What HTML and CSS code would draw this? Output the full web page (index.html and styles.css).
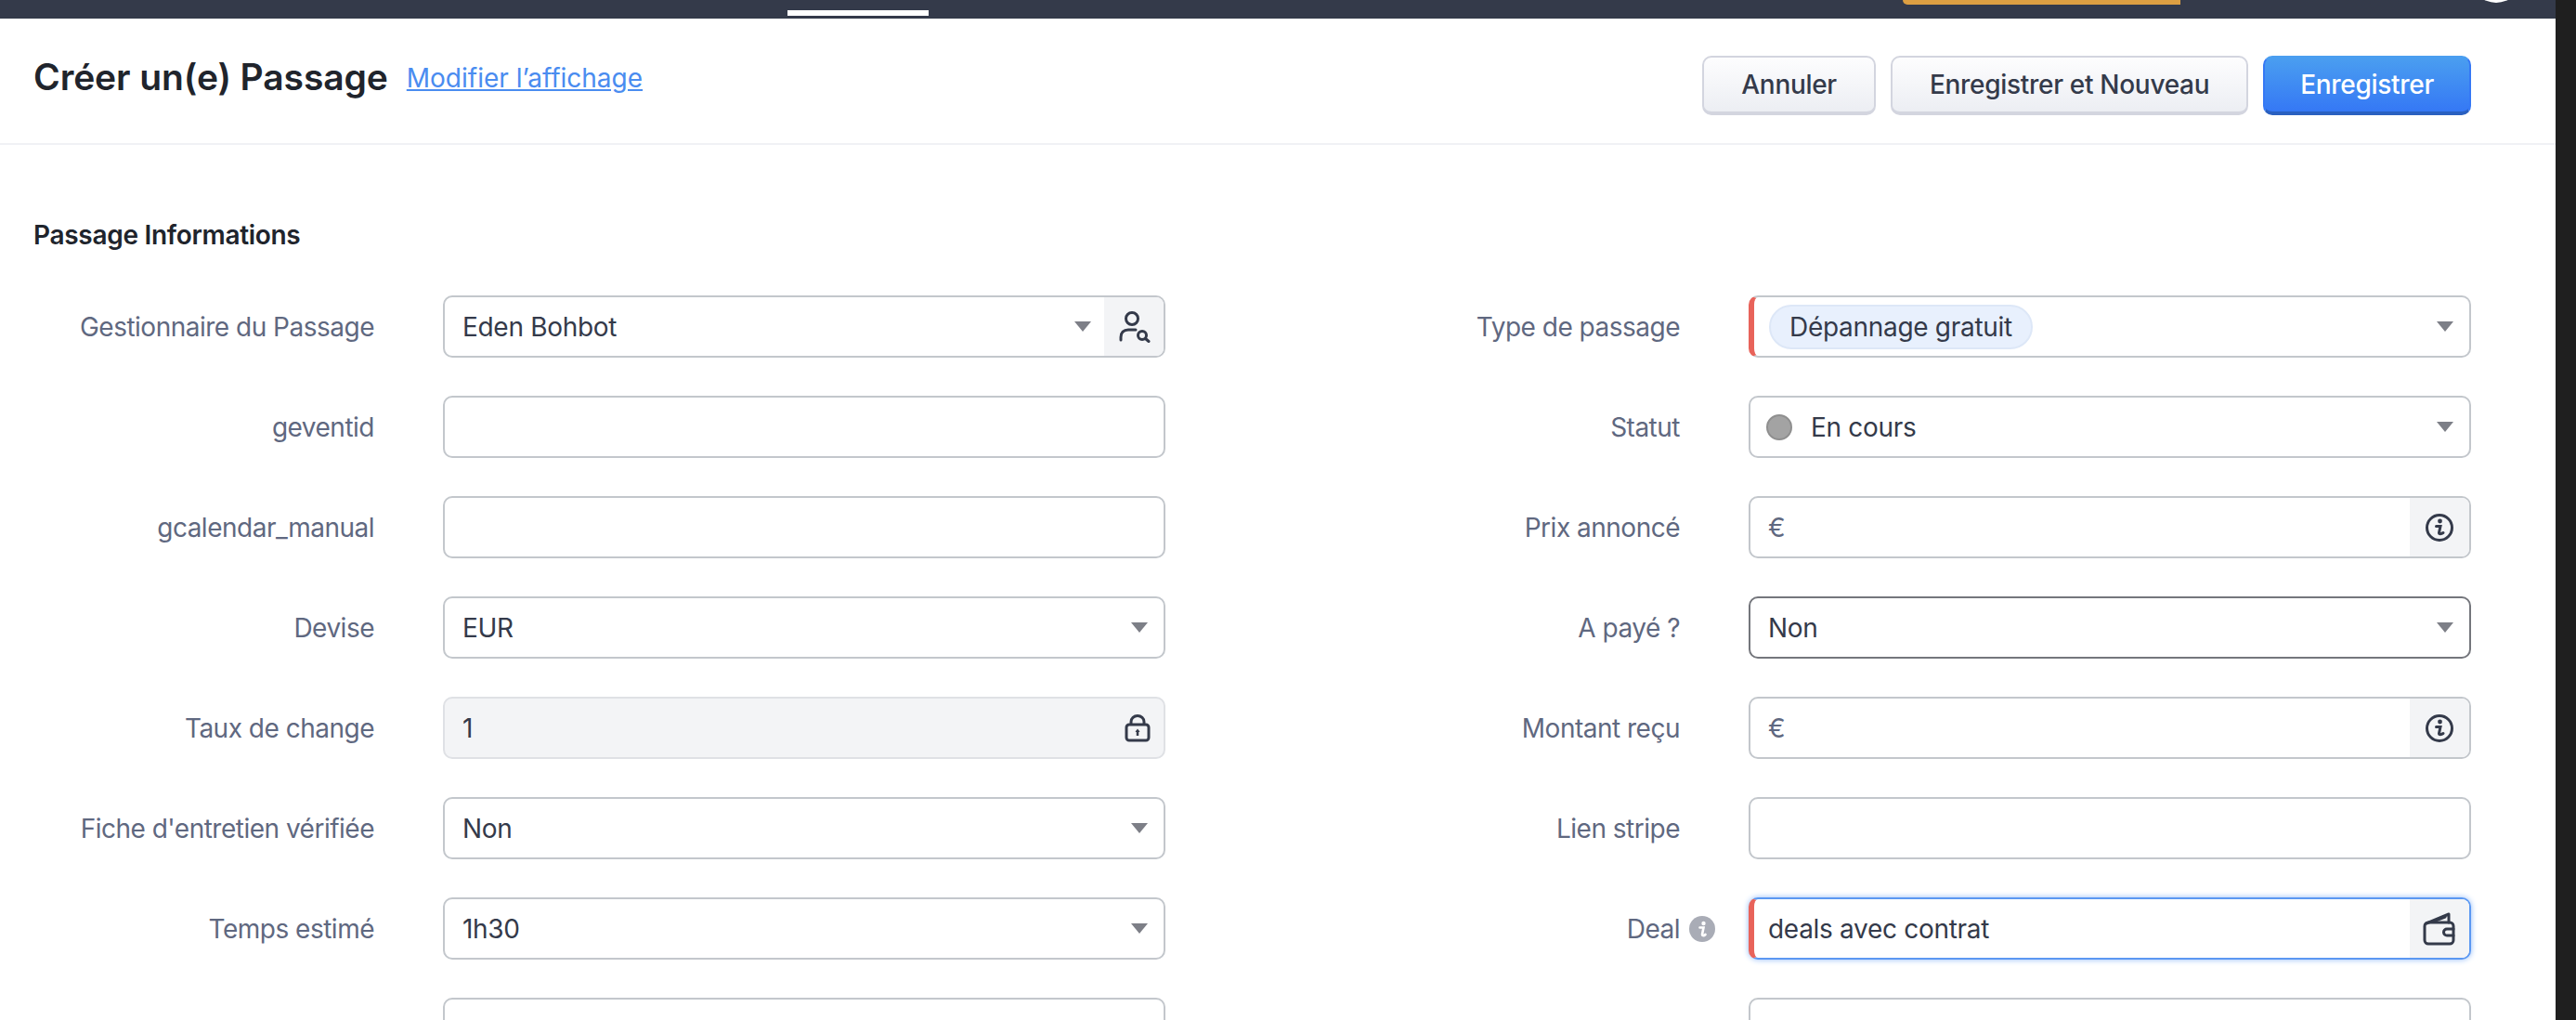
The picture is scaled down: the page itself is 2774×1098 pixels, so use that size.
FILE: index.html
```html
<!DOCTYPE html>
<html lang="fr">
<head>
    <meta charset="UTF-8">
    <title>Créer un(e) Passage</title>
    <link rel="stylesheet" href="styles.css">
</head>
<body>
<div class="page">
    <div class="main">
        <div class="topbar">
            <span class="tab-mark"></span>
            <span class="trial-mark"></span>
            <span class="avatar-mark"></span>
        </div>
        <div class="head">
            <div class="head-title">
                <h1>Créer un(e) Passage</h1>
                <a class="head-link" href="#">Modifier l’affichage</a>
            </div>
            <div class="head-btns">
                <button class="btn">Annuler</button>
                <button class="btn">Enregistrer et Nouveau</button>
                <button class="btn btn-blue">Enregistrer</button>
            </div>
        </div>
        <h2 class="section">Passage Informations</h2>
        <div class="form">
            <div class="col">
                <div class="row">
                    <label>Gestionnaire du Passage</label>
                    <div class="field">
                        <span class="val">Eden Bohbot</span>
                        <span class="arrow arrow-tight"></span>
                        <span class="addon">
                            <svg width="36" height="36" viewBox="0 0 36 36" fill="none" stroke="#343a4a" stroke-width="3" stroke-linecap="round"><circle cx="16" cy="9" r="6.500"/><path d="M4 32v-3c0-5 3-8 8-8h8"/><circle cx="27" cy="27" r="4.500"/><path d="M30.500 30.500l3.500 3"/></svg>
                        </span>
                    </div>
                </div>
                <div class="row"><label>geventid</label><div class="field"></div></div>
                <div class="row"><label>gcalendar_manual</label><div class="field"></div></div>
                <div class="row">
                    <label>Devise</label>
                    <div class="field"><span class="val">EUR</span><span class="arrow"></span></div>
                </div>
                <div class="row">
                    <label>Taux de change</label>
                    <div class="field field-off">
                        <span class="val">1</span>
                        <svg class="lock" width="28" height="30" viewBox="0 0 28 30" fill="none" stroke="#343a4a" stroke-width="3" stroke-linejoin="round"><rect x="2" y="11" width="24" height="17" rx="3"/><path d="M7 11V8a7 6.500 0 0 1 14 0v3"/><path d="M14 17v6" stroke-width="2.500"/><path d="M11.500 19l2.500-3.500 2.500 3.500z" fill="#343a4a" stroke="none"/></svg>
                    </div>
                </div>
                <div class="row">
                    <label>Fiche d'entretien vérifiée</label>
                    <div class="field"><span class="val">Non</span><span class="arrow"></span></div>
                </div>
                <div class="row">
                    <label>Temps estimé</label>
                    <div class="field"><span class="val">1h30</span><span class="arrow"></span></div>
                </div>
                <div class="row"><label></label><div class="field"></div></div>
            </div>
            <div class="col">
                <div class="row">
                    <label>Type de passage</label>
                    <div class="field field-req">
                        <span class="tag">Dépannage gratuit</span>
                        <span class="arrow"></span>
                    </div>
                </div>
                <div class="row">
                    <label>Statut</label>
                    <div class="field"><span class="dot"></span><span class="val">En cours</span><span class="arrow"></span></div>
                </div>
                <div class="row">
                    <label>Prix annoncé</label>
                    <div class="field">
                        <span class="val val-cur">€</span>
                        <span class="addon">
                            <svg width="34" height="34" viewBox="0 0 34 34" fill="none" stroke="#343a4a" stroke-width="3"><circle cx="17" cy="17" r="13.500"/><circle cx="17.500" cy="10" r="2.400" fill="#343a4a" stroke="none"/><path d="M13.500 15.500h4.500l-1.500 7c0 1.500 2.500 1.500 4.500 0" stroke-linecap="round"/></svg>
                        </span>
                    </div>
                </div>
                <div class="row">
                    <label>A payé ?</label>
                    <div class="field field-dark"><span class="val">Non</span><span class="arrow"></span></div>
                </div>
                <div class="row">
                    <label>Montant reçu</label>
                    <div class="field">
                        <span class="val val-cur">€</span>
                        <span class="addon">
                            <svg width="34" height="34" viewBox="0 0 34 34" fill="none" stroke="#343a4a" stroke-width="3"><circle cx="17" cy="17" r="13.500"/><circle cx="17.500" cy="10" r="2.400" fill="#343a4a" stroke="none"/><path d="M13.500 15.500h4.500l-1.500 7c0 1.500 2.500 1.500 4.500 0" stroke-linecap="round"/></svg>
                        </span>
                    </div>
                </div>
                <div class="row"><label>Lien stripe</label><div class="field"></div></div>
                <div class="row">
                    <label>Deal
                        <svg class="hint" width="28" height="28" viewBox="0 0 28 28"><circle cx="14" cy="14" r="14" fill="#a9acb6"/><circle cx="15.500" cy="8" r="2.200" fill="#fff"/><path d="M11.500 12.500h4l-1.500 7.500c0 1.500 2 1.500 3.500 0" stroke="#fff" stroke-width="2.600" fill="none" stroke-linecap="round"/></svg>
                    </label>
                    <div class="field field-req field-focus">
                        <span class="val">deals avec contrat</span>
                        <span class="addon">
                            <svg width="36" height="36" viewBox="0 0 36 36" fill="none" stroke="#343a4a" stroke-width="3" stroke-linejoin="round" stroke-linecap="round"><path d="M4 12L28 2v9"/><path d="M11 10l13-5"/><rect x="2" y="11" width="31" height="23" rx="4"/><path d="M33 18h-7a3.500 3.500 0 0 0 0 7h7"/></svg>
                        </span>
                    </div>
                </div>
                <div class="row"><label></label><div class="field"></div></div>
            </div>
        </div>
    </div>
    <div class="scroll-strip"></div>
</div>
</body>
</html>
```

FILE: styles.css
```css
*{
    box-sizing: border-box;
}
html,body{
    margin: 0;
    height: 100%;
    overflow: hidden;
    background: #fff;
}
body{
    font-family: "Inter", "Liberation Sans", sans-serif;
    color: #343a4a;
}
.page{
    display: flex;
    height: 1098px;
    overflow: hidden;
}
.main{
    flex: 1;
    min-width: 0;
}
.scroll-strip{
    width: 22px;
    background: #1f1f1f;
}

.topbar{
    position: relative;
    height: 20px;
    background: #343a4a;
    overflow: hidden;
}
.tab-mark{
    position: absolute;
    left: 848px;
    top: 11px;
    width: 152px;
    height: 6px;
    background: #fff;
}
.trial-mark{
    position: absolute;
    left: 2049px;
    top: 0;
    width: 299px;
    height: 5px;
    background: #dd9f42;
    border-bottom-left-radius: 5px;
}
.avatar-mark{
    position: absolute;
    left: 2660px;
    top: -53px;
    width: 56px;
    height: 56px;
    border-radius: 50%;
    background: #fff;
}

.head{
    display: flex;
    justify-content: space-between;
    height: 136px;
    padding: 40px 91px 0 36px;
    border-bottom: 2px solid #f0f1f5;
}
.head-title{
    display: flex;
    align-items: center;
    gap: 20px;
    height: 48px;
}
h1{
    margin: 0 0 3px;
    font-size: 39px;
    font-weight: 600;
    letter-spacing: -.1px;
    color: #20242c;
}
.head-link{
    font-size: 28px;
    color: #4a8cf0;
}
.head-btns{
    display: flex;
    gap: 16px;
}
.btn{
    height: 64px;
    padding: 0 40px;
    font-family: inherit;
    font-size: 28px;
    font-weight: 500;
    letter-spacing: -.3px;
    color: #343a4a;
    background: linear-gradient(#fdfdfe, #eceef3);
    border: 2px solid #d3d5df;
    border-bottom-width: 4px;
    border-radius: 10px;
}
.btn-blue{
    padding: 0 38px;
    color: #fff;
    background: linear-gradient(#4a9ef0, #3578f5);
    border-color: #4a9ef0 #3578f5 #2a60c0;
}

.section{
    margin: 80px 0 0 36px;
    font-size: 28px;
    line-height: 34px;
    font-weight: 600;
    letter-spacing: -.3px;
    color: #20242c;
}
.form{
    display: grid;
    grid-template-columns: 1255px 1255px;
    column-gap: 151px;
    padding-top: 48px;
}
.col{
    display: flex;
    flex-direction: column;
    gap: 41px;
}
.row{
    display: grid;
    grid-template-columns: 403px 778px;
    column-gap: 74px;
    align-items: center;
    height: 67px;
}
.row label{
    display: flex;
    align-items: center;
    justify-content: flex-end;
    gap: 10px;
    font-size: 28px;
    letter-spacing: -.5px;
    color: #5f6880;
}
.hint{
    margin-right: -38px;
}
.field{
    display: flex;
    align-items: center;
    height: 67px;
    padding-left: 19px;
    background: #fff;
    border: 2px solid #c3c7cc;
    border-radius: 10px;
    overflow: hidden;
}
.val{
    font-size: 28px;
    letter-spacing: -.3px;
    color: #343a4a;
}
.val-cur{
    color: #5f6880;
}
.arrow{
    margin-left: auto;
    margin-right: 17px;
    border-left: 9px solid transparent;
    border-right: 9px solid transparent;
    border-top: 11px solid #7d7f87;
}
.arrow-tight{
    margin-right: 14px;
}
.addon{
    display: flex;
    align-items: center;
    justify-content: center;
    flex: none;
    width: 64px;
    height: 100%;
    background: #f3f4f6;
}
.val + .addon{
    margin-left: auto;
}
.field-off{
    background: #f3f4f6;
    border-color: #dfe1e5;
}
.lock{
    margin-left: auto;
    margin-right: 14px;
}
.field-req{
    border-left: 6px solid #e8635a;
    padding-left: 16px;
}
.field-dark{
    border-color: #74767c;
}
.field-focus{
    padding-left: 15px;
    border-color: #5b98f2 #5b98f2 #5b98f2 #e8635a;
    box-shadow: 0 0 6px #8fb9f7;
}
.tag{
    height: 48px;
    padding: 0 20px;
    font-size: 28px;
    line-height: 44px;
    letter-spacing: -.3px;
    background: #e8f0fd;
    border: 2px solid #dde7f7;
    border-radius: 24px;
}
.dot{
    width: 28px;
    height: 28px;
    margin: 0 20px 0 -2px;
    background: #a3a3a3;
    border: 2px solid #8f8f8f;
    border-radius: 50%;
}
```
